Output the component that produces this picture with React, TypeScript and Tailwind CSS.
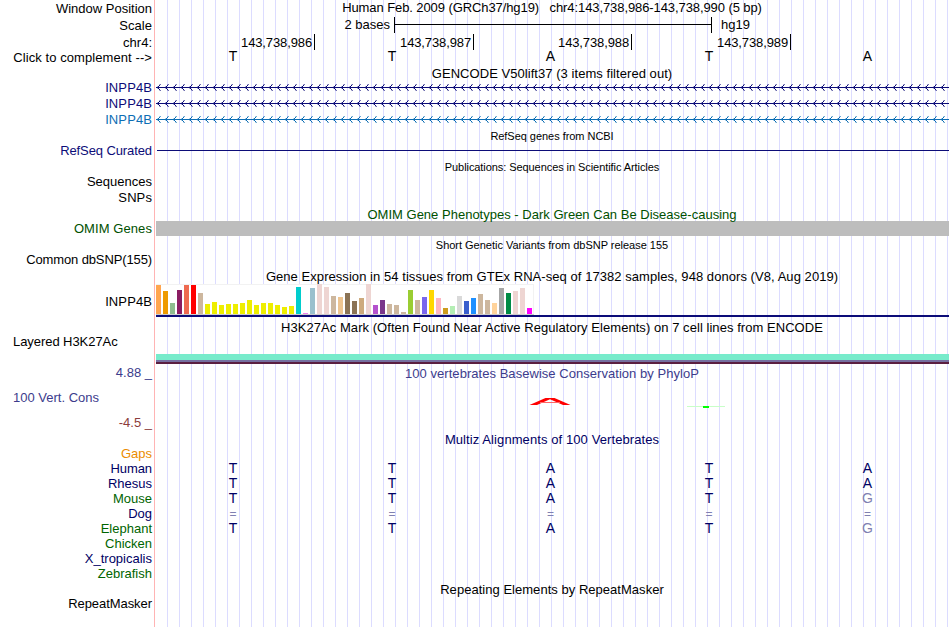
import type { ReactNode } from 'react';

type Label = {
  text: string;
  height: string;
  color?: string;
  extra?: string;
};

// each label's height runs to the top of the next one
const labels: Label[] = [
  { text: 'Window Position', height: 'h-[17px]' },
  { text: 'Scale', height: 'h-[17px]', extra: 'tracking-[0.05px]' },
  { text: 'chr4:', height: 'h-[15px]' },
  { text: 'Click to complement -->', height: 'h-[30px]', extra: 'tracking-[0.08px]' },
  { text: 'INPP4B', height: 'h-4', color: 'text-[#0c0c78]', extra: 'tracking-[0.1px]' },
  { text: 'INPP4B', height: 'h-4', color: 'text-[#0c0c78]', extra: 'tracking-[0.1px]' },
  { text: 'INPP4B', height: 'h-[31px]', color: 'text-[#0c6eb4]', extra: 'tracking-[0.1px]' },
  { text: 'RefSeq Curated', height: 'h-[31px]', color: 'text-[#0c0c78]', extra: 'tracking-[-0.1px]' },
  { text: 'Sequences', height: 'h-4' },
  { text: 'SNPs', height: 'h-[31px]', extra: 'tracking-[0.1px]' },
  { text: 'OMIM Genes', height: 'h-[31px]', color: 'text-[#005000]', extra: 'tracking-[0.08px]' },
  { text: 'Common dbSNP(155)', height: 'h-[42px]', extra: 'tracking-[-0.12px]' },
  { text: 'INPP4B', height: 'h-10', extra: 'tracking-[0.1px]' },
  { text: 'Layered H3K27Ac', height: 'h-[31px]', extra: 'text-left tracking-[-0.06px]' },
  { text: '4.88 _', height: 'h-[25px]', color: 'text-[#3c3c8c]' },
  { text: '100 Vert. Cons', height: 'h-[25px]', color: 'text-[#3c3c8c]', extra: 'text-left' },
  { text: '-4.5 _', height: 'h-[31px]', color: 'text-[#8c3c3c]' },
  { text: 'Gaps', height: 'h-[15px]', color: 'text-[#eb8c00]' },
  { text: 'Human', height: 'h-[15px]', color: 'text-[#000064]', extra: 'tracking-[-0.1px]' },
  { text: 'Rhesus', height: 'h-[15px]', color: 'text-[#000064]' },
  { text: 'Mouse', height: 'h-[15px]', color: 'text-[#006400]' },
  { text: 'Dog', height: 'h-[15px]', color: 'text-[#000064]' },
  { text: 'Elephant', height: 'h-[15px]', color: 'text-[#006400]' },
  { text: 'Chicken', height: 'h-[15px]', color: 'text-[#006400]' },
  { text: 'X_tropicalis', height: 'h-[15px]', color: 'text-[#000064]' },
  { text: 'Zebrafish', height: 'h-[30px]', color: 'text-[#006400]' },
  { text: 'RepeatMasker', height: 'h-[15px]', extra: 'tracking-[-0.06px]' },
];

const positions = ['143,738,986', '143,738,987', '143,738,988', '143,738,989', ''];

const alignments = ['TTATA', 'TTATA', 'TTATG', '=====', 'TTATG'];

// [color, height] per tissue
const tissues: [string, number][] = [
  ['#FFA54F', 29], ['#EE9A00', 23], ['#8FBC8F', 11], ['#8B1C62', 24], ['#EE6A50', 29], ['#FF0000', 29],
  ['#CDB79E', 21], ['#EEEE00', 10], ['#EEEE00', 12], ['#EEEE00', 9], ['#EEEE00', 10], ['#EEEE00', 10],
  ['#EEEE00', 11], ['#EEEE00', 14], ['#EEEE00', 9], ['#EEEE00', 11], ['#EEEE00', 11], ['#EEEE00', 9],
  ['#EEEE00', 7], ['#EEEE00', 8], ['#00CDCD', 27], ['#EE82EE', 1], ['#9AC0CD', 26], ['#EED5D2', 30],
  ['#EED5D2', 27], ['#CDB79E', 18], ['#EEC591', 17], ['#8B7355', 21], ['#8B7355', 13], ['#CDAA7D', 16],
  ['#EED5D2', 30], ['#B452CD', 9], ['#7A378B', 14], ['#CDB79E', 10], ['#CDB79E', 9], ['#CDB79E', 2],
  ['#9ACD32', 24], ['#CDB79E', 14], ['#7A67EE', 17], ['#FFD700', 24], ['#FFB6C1', 16], ['#CD9B1D', 6],
  ['#B4EEB4', 8], ['#D9D9D9', 18], ['#3A5FCD', 13], ['#1E90FF', 16], ['#CDB79E', 20], ['#CDB79E', 14],
  ['#FFD39B', 11], ['#A6A6A6', 26], ['#008B45', 21], ['#EED5D2', 23], ['#EED5D2', 26], ['#FF00FF', 6],
];

function Title({ className = '', children }: { className?: string; children: ReactNode }) {
  return <h2 className={`h-[15px] pr-px text-center whitespace-pre ${className}`}>{children}</h2>;
}

function GeneLine({ color }: { color: string }) {
  return (
    <svg className="mb-[9px] block h-[7px] w-[793px]" viewBox="0 0 793 7" shapeRendering="crispEdges">
      <rect x="0" y="3" width="793" height="1" fill={color} />
      {Array.from({ length: 99 }, (_, i) => (
        <g key={i} fill={color} transform={`translate(${i * 8 + 1} 0)`}>
          <path d="M0 3h1v1h-1zM1 2h1v3h-1zM2 1h1v1h-1zM2 5h1v1h-1z" />
          <path d="M2 0h1v1h-1zM2 6h1v1h-1zM0 2h1v3h-1z" opacity="0.3" />
          <path d="M3 0h1v1h-1zM3 6h1v1h-1z" opacity="0.6" />
        </g>
      ))}
    </svg>
  );
}

function Bases({ bases, className = 'text-[14px]' }: { bases: string; className?: string }) {
  return (
    <div className={`grid h-[15px] grid-cols-[159px_159px_158px_159px_158px] text-center ${className}`}>
      {bases.split('').map((base, i) => (
        <span key={i} className={`pr-[5px] ${base === '=' || base === 'G' ? 'text-[#8080b1]' : ''}`}>
          {base}
        </span>
      ))}
    </div>
  );
}

export default function App() {
  return (
    <main className="flex h-[627px] w-[950px] overflow-hidden bg-white font-['Liberation_Sans',Arial,sans-serif] text-[13px] leading-[15px] text-black">
      <aside className="flex w-[154px] shrink-0 flex-col pt-px pr-[2px] pl-[13px] text-right whitespace-pre">
        {labels.map((label, i) => (
          <div key={i} className={`shrink-0 ${label.height} ${label.color ?? ''} ${label.extra ?? ''}`}>
            {label.text}
          </div>
        ))}
      </aside>
      <div className="w-px shrink-0 bg-[#ffb4b4]" />
      <div className="ml-px w-[793px] shrink-0 bg-[repeating-linear-gradient(to_right,transparent_0_11px,#dcdcff_11px_12px)]">
        <Title className="tracking-[-0.09px]">Human Feb. 2009 (GRCh37/hg19)   chr4:143,738,986-143,738,990 (5 bp)</Title>

        <div className="mt-[2px] flex h-4">
          <span className="w-[234px] text-right">2 bases</span>
          <div className="ml-1 flex w-[318px] border-x border-black">
            <div className="mt-[7px] h-px w-full bg-black" />
          </div>
          <span className="ml-[9px]">hg19</span>
        </div>

        <div className="mt-px grid h-[15px] grid-cols-[159px_159px_158px_159px_158px] text-right tracking-[-0.12px]">
          {positions.map((position, i) => (
            <span key={i} className={i < 4 ? 'border-r border-black pt-px pr-[2px]' : ''}>
              {position}
            </span>
          ))}
        </div>
        <Bases bases="TTATA" />

        <Title className="mt-[2px] tracking-[0.05px]">GENCODE V50lift37 (3 items filtered out)</Title>
        <div className="h-12 pt-[3px]">
          <GeneLine color="#0c0c78" />
          <GeneLine color="#0c0c78" />
          <GeneLine color="#0c6eb4" />
        </div>

        <Title className="text-[11px] tracking-[-0.04px]">RefSeq genes from NCBI</Title>
        <div className="mt-[6px] ml-px h-px bg-[#0c0c78]" />

        <Title className="mt-[9px] text-[11px] tracking-[-0.07px]">Publications: Sequences in Scientific Articles</Title>

        <Title className="mt-8 tracking-[0.01px] text-[#005000]">OMIM Gene Phenotypes - Dark Green Can Be Disease-causing</Title>
        <div className="-mt-px h-[15px] bg-[#bdbdbd]" />

        <Title className="mt-[2px] text-[11px] tracking-[-0.02px]">Short Genetic Variants from dbSNP release 155</Title>

        <Title className="mt-4 tracking-[0.055px]">Gene Expression in 54 tissues from GTEx RNA-seq of 17382 samples, 948 donors (V8, Aug 2019)</Title>
        <div className="flex h-[31px] w-[378px] items-end gap-[2px] border-b border-[#ccc] bg-white shadow-[inset_-1px_1px_0_#f2f2f2]">
          {tissues.map(([color, height], i) => (
            <div key={i} className="w-[5px] shrink-0" style={{ backgroundColor: color, height }} />
          ))}
        </div>
        <div className="h-[2px] bg-[#0c0c78]" />

        <Title className="mt-[3px] tracking-[0.05px]">H3K27Ac Mark (Often Found Near Active Regulatory Elements) on 7 cell lines from ENCODE</Title>
        <div className="mt-[19px] h-[6px] bg-[#77ebcb]" />
        <div className="h-[2px] bg-[#766fa0]" />
        <div className="h-[2px] bg-[#5b1f40]" />

        <Title className="mt-[2px] tracking-[0.04px] text-[#3c3c8c]">100 vertebrates Basewise Conservation by PhyloP</Title>
        <svg className="mt-[17px] block h-[10px] w-[793px]" viewBox="0 0 793 10">
          <path d="M373.5 7L389.5 0H398.5L414.5 7H407L394 1.2L381 7Z" fill="#f00" />
          <path d="M384 4.5H404" stroke="#f66" />
          <path d="M531 8.5H569" stroke="#c8ffc8" />
          <rect x="547" y="8" width="6" height="2" fill="#0f0" />
        </svg>

        <Title className="mt-6 tracking-[0.09px] text-[#000064]">Multiz Alignments of 100 Vertebrates</Title>
        <div className="mt-[14px] text-[#000064]">
          {alignments.map((bases, i) => (
            <Bases key={i} bases={bases} className={bases[0] === '=' ? 'pt-px text-[12px] leading-[14px]' : 'text-[14px]'} />
          ))}
        </div>

        <Title className="mt-[46px] tracking-[0.03px]">Repeating Elements by RepeatMasker</Title>
      </div>
    </main>
  );
}
